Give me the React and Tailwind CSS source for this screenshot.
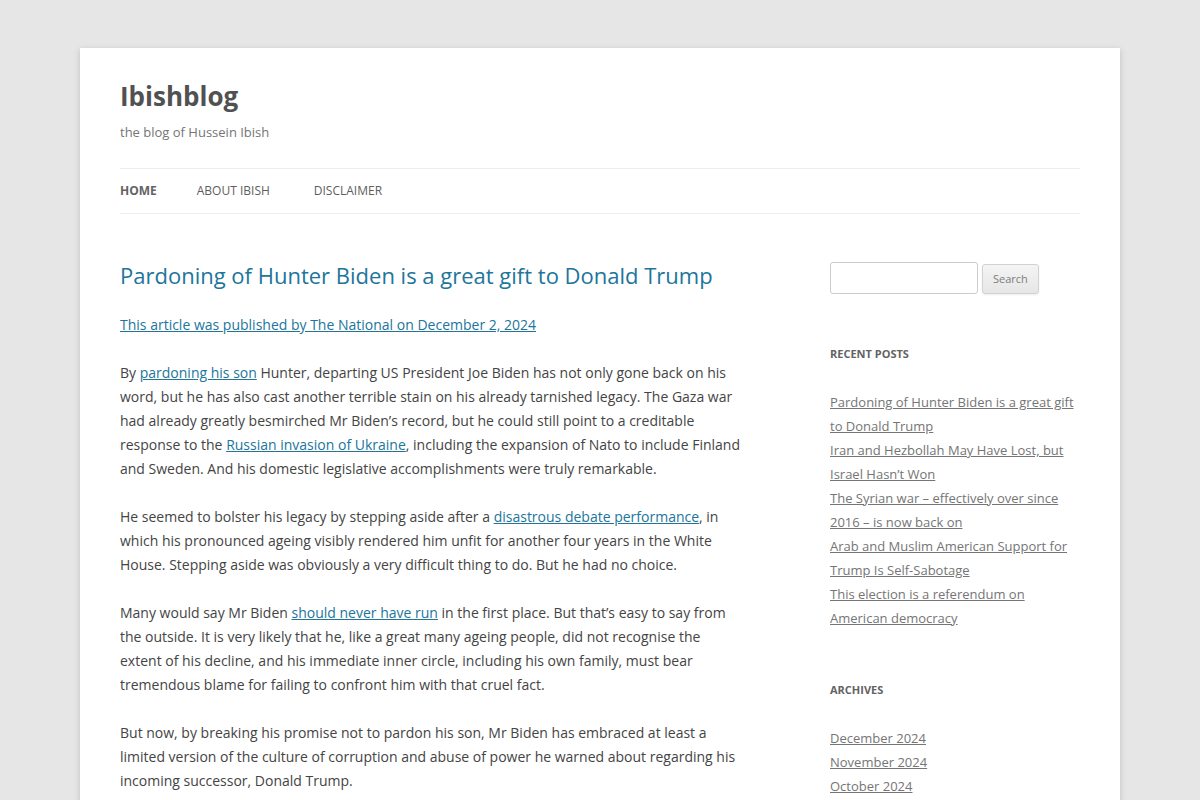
import React from "react";

const A = ({ children }) => (
  <a href="#" className="text-[#21759b] underline">{children}</a>
);

const recent = [
  "Pardoning of Hunter Biden is a great gift to Donald Trump",
  "Iran and Hezbollah May Have Lost, but Israel Hasn’t Won",
  "The Syrian war – effectively over since 2016 – is now back on",
  "Arab and Muslim American Support for Trump Is Self-Sabotage",
  "This election is a referendum on American democracy",
];

const archives = ["December 2024", "November 2024", "October 2024", "September 2024"];

export default function App() {
  return (
    <div
      className="min-h-screen bg-[#e6e6e6] pt-[48px] pb-[48px]"
      style={{ fontFamily: '"Open Sans", "Liberation Sans", sans-serif' }}
    >
      <div className="mx-auto w-[1040px] bg-white px-[40px] shadow-[0_2px_6px_rgba(100,100,100,0.3)]">
        <header className="pt-[24px] pb-[24px]">
          <h1 className="mt-[2px] text-[26px] leading-[44px] font-bold text-[#515151]">Ibishblog</h1>
          <h2 className="mt-[2px] text-[13px] leading-[24px] font-normal text-[#757575]">the blog of Hussein Ibish</h2>
          <nav className="mt-[24px] border-t border-b border-[#ededed] flex">
            <a href="#" className="mr-[40px] text-[12px] leading-[44px] uppercase font-bold text-[#636363]">Home</a>
            <a href="#" className="mr-[44px] text-[12px] leading-[44px] uppercase text-[#5e5e5e]">About Ibish</a>
            <a href="#" className="mr-[40px] text-[12px] leading-[44px] uppercase text-[#5e5e5e]">Disclaimer</a>
          </nav>
        </header>

        <div className="mt-[24px] flex justify-between">
          <main className="w-[625px]">
            <article>
              <h1 className="mb-[25px] text-[22px] leading-[26px] font-normal text-[#21759b]">
                Pardoning of Hunter Biden is a great gift to Donald Trump
              </h1>
              <div className="text-[14px] leading-[24px] text-[#444]">
                <p className="mb-[24px]">
                  <A>This article was published by The National on December 2, 2024</A>
                </p>
                <p className="mb-[24px]">
                  By <A>pardoning his son</A> Hunter, departing US President Joe Biden has not only gone back on his word, but he has also cast another terrible stain on his already tarnished legacy. The Gaza war had already greatly besmirched Mr Biden’s record, but he could still point to a creditable response to the <A>Russian invasion of Ukraine</A>, including the expansion of Nato to include Finland and Sweden. And his domestic legislative accomplishments were truly remarkable.
                </p>
                <p className="mb-[24px]">
                  He seemed to bolster his legacy by stepping aside after a <A>disastrous debate performance</A>, in which his pronounced ageing visibly rendered him unfit for another four years in the White House. Stepping aside was obviously a very difficult thing to do. But he had no choice.
                </p>
                <p className="mb-[24px]">
                  Many would say Mr Biden <A>should never have run</A> in the first place. But that’s easy to say from the outside. It is very likely that he, like a great many ageing people, did not recognise the extent of his decline, and his immediate inner circle, including his own family, must bear tremendous blame for failing to confront him with that cruel fact.
                </p>
                <p className="mb-[24px]">
                  But now, by breaking his promise not to pardon his son, Mr Biden has embraced at least a limited version of the culture of corruption and abuse of power he warned about regarding his incoming successor, Donald Trump.
                </p>
              </div>
            </article>
          </main>

          <aside className="w-[250px] text-[13px] leading-[24px] text-[#757575]">
            <div className="mb-[48px] flex items-center gap-[4px]">
              <input
                type="text"
                className="w-[148px] h-[32px] rounded-[3px] border border-[#ccc] px-[6px] text-[13px] outline-none"
              />
              <button className="h-[30px] mt-[1px] rounded-[3px] border border-[#d2d2d2] bg-gradient-to-b from-[#f4f4f4] to-[#e6e6e6] px-[10px] text-[11px] text-[#7c7c7c] shadow-[0_1px_2px_rgba(64,64,64,0.1)]">
                Search
              </button>
            </div>

            <div className="mb-[48px]">
              <h3 className="mb-[24px] text-[11px] leading-[24px] font-bold uppercase text-[#636363]">Recent Posts</h3>
              <ul>
                {recent.map((t) => (
                  <li key={t}>
                    <a href="#" className="underline text-[#757575]">{t}</a>
                  </li>
                ))}
              </ul>
            </div>

            <div className="mb-[48px]">
              <h3 className="mb-[24px] text-[11px] leading-[24px] font-bold uppercase text-[#636363]">Archives</h3>
              <ul>
                {archives.map((t) => (
                  <li key={t}>
                    <a href="#" className="underline text-[#757575]">{t}</a>
                  </li>
                ))}
              </ul>
            </div>
          </aside>
        </div>
      </div>
    </div>
  );
}
